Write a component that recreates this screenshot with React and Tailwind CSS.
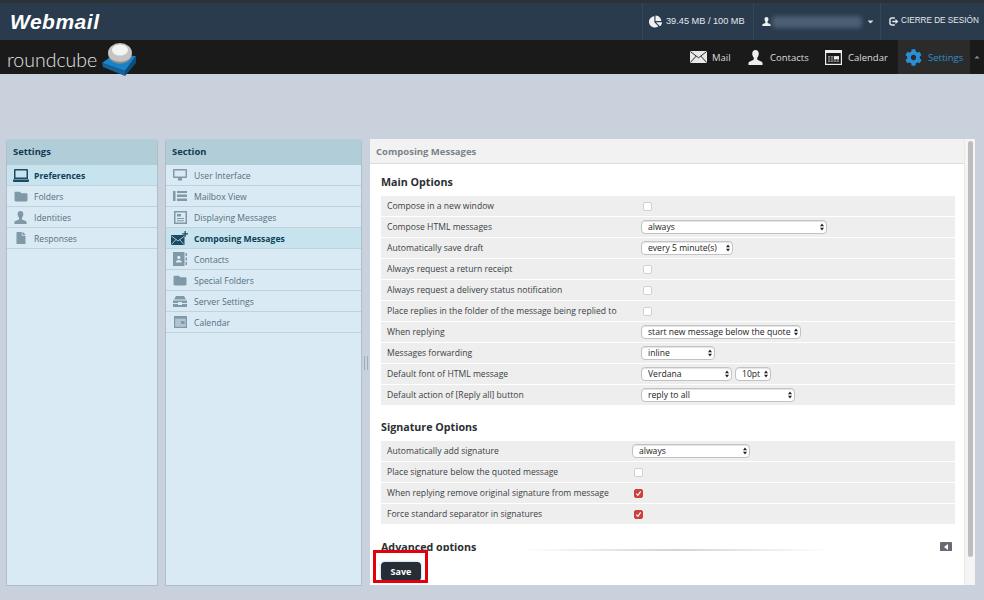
import React from "react";
import { FaChartPie, FaCaretDown, FaCog, FaFolder, FaFile, FaCaretUp } from "react-icons/fa";

const bodyFont = "font-['Open_Sans',sans-serif]";

function UserBust({ className }) {
  return (
    <svg viewBox="0 0 16 16" className={`${className} shrink-0`} fill="currentColor">
      <path d="M8 0c2.2 0 3.5 1.6 3.5 3.8 0 2-.8 3.6-1.7 4.5v1.4c0 .8 1 1.2 2.4 1.7 1.8.6 3.3 1.2 3.3 2.6V16H.5v-2c0-1.4 1.5-2 3.3-2.6 1.4-.5 2.4-.9 2.4-1.7V8.3C5.3 7.4 4.5 5.8 4.5 3.8 4.5 1.6 5.8 0 8 0z" />
    </svg>
  );
}

function Laptop() {
  return (
    <svg viewBox="0 0 16 13" className="w-[16px] h-[13px]" fill="currentColor">
      <path d="M2 0h12a1 1 0 0 1 1 1v9H1V1a1 1 0 0 1 1-1zm.5 1.5v7h11v-7z" />
      <path d="M0 10.5h16V12a1 1 0 0 1-1 1H1a1 1 0 0 1-1-1z" />
    </svg>
  );
}

function Monitor() {
  return (
    <svg viewBox="0 0 14 13" className="w-[14px] h-[13px]" fill="currentColor">
      <path d="M1 0h12a1 1 0 0 1 1 1v7a1 1 0 0 1-1 1H1a1 1 0 0 1-1-1V1a1 1 0 0 1 1-1zm.5 1.5v6h11v-6z" />
      <path d="M5 9h4v2.5H5z" />
    </svg>
  );
}

function ListIcon() {
  return (
    <svg viewBox="0 0 14 10" className="w-[14px] h-[10px]" fill="currentColor">
      <path d="M0 0h2.5v10H0zM4 0h10v2H4zM4 3.5h10V6H4zM4 7.5h10V10H4z" />
    </svg>
  );
}

function DocIcon() {
  return (
    <svg viewBox="0 0 13 13" className="w-[13px] h-[13px]" fill="currentColor">
      <path fillRule="evenodd" d="M0 0h13v13H0zM1.5 1.5v10h10v-10z" />
      <path d="M3 3h4v2.5H3zM3 7h7v1H3zM3 9.2h7v1H3z" />
    </svg>
  );
}

function MailPlus() {
  return (
    <svg viewBox="0 0 18 14" className="w-[18px] h-[14px]">
      <path d="M0 4h13.5v10H0z" fill="currentColor" />
      <path d="M0.5 5l6.5 5 6.5-5M0.5 13.5l4.5-5M13 13.5l-4.5-5" stroke="#c6e3ee" strokeWidth="0.8" fill="none" />
      <path d="M13.5 0h1.3v2.2H17v1.3h-2.2v2.2h-1.3V3.5h-2.2V2.2h2.2z" fill="currentColor" />
    </svg>
  );
}

function ContactCard() {
  return (
    <svg viewBox="0 0 14 14" className="w-[14px] h-[14px]">
      <path d="M0 0h11.5v14H0z" fill="currentColor" />
      <path d="M12.5 1h1.5v3h-1.5zM12.5 5.5h1.5v3h-1.5zM12.5 10h1.5v3h-1.5z" fill="currentColor" />
      <circle cx="5.8" cy="5.5" r="1.7" fill="#d9eaf4" />
      <path d="M2.8 10.5c0-2 1.5-2.6 3-2.6s3 .6 3 2.6z" fill="#d9eaf4" />
    </svg>
  );
}

function ServerIcon() {
  return (
    <svg viewBox="0 0 14 11" className="w-[14px] h-[11px]" fill="currentColor">
      <path d="M3 0h8l2 3.5H1z" />
      <path d="M0 4.5h14V7H9V6H5v1H0zM0 8h5v1h4V8h5v3H0z" />
    </svg>
  );
}

function CalendarSmall() {
  return (
    <svg viewBox="0 0 13 12" className="w-[13px] h-[12px]">
      <path d="M0 0h13v12H0z" fill="currentColor" />
      <path d="M1.2 2.6h10.6v8.2H1.2z" fill="#d9eaf4" opacity="0.55" />
      <path d="M7 5h3.5v3H7z" fill="currentColor" />
    </svg>
  );
}

function MailNav() {
  return (
    <svg viewBox="0 0 17 12" className="w-[17px] h-[12px] shrink-0">
      <path d="M0 0h17v12H0z" fill="#e8e8e8" />
      <path d="M0.3 0.5l8.2 6.3 8.2-6.3M0.3 11.6l5.8-6.5M16.7 11.6l-5.8-6.5" stroke="#1a1a1a" strokeWidth="0.9" fill="none" />
    </svg>
  );
}

function CalendarNav() {
  return (
    <svg viewBox="0 0 17 15" className="w-[17px] h-[15px] shrink-0">
      <path d="M0 0h17v15H0z" fill="#eee" />
      <path d="M1.2 3h14.6v10.8H1.2z" fill="#1a1a1a" />
      <path d="M3 6h11v6H3z" fill="#8a8a8a" />
      <path d="M5.5 6v6M8.5 6v6M11.5 6v6M3 8h11M3 10h11" stroke="#1a1a1a" strokeWidth="0.6" />
      <path d="M9 6.2h5v3H9z" fill="#eee" />
    </svg>
  );
}

function LogoutIcon() {
  return (
    <svg viewBox="0 0 11 10" className="w-[10px] h-[9px] shrink-0" fill="none" stroke="#e4e8ec" strokeWidth="1.6">
      <path d="M6.5 1.2H3a2 2 0 0 0-2 2v3.6a2 2 0 0 0 2 2h3.5" />
      <path d="M3.5 5H8" />
      <path d="M7.2 2.2L10.4 5 7.2 7.8z" fill="#e4e8ec" stroke="none" />
    </svg>
  );
}

function CubeLogo() {
  return (
    <svg viewBox="0 0 36 34" className="w-[36px] h-[34px]">
      <path d="M1 20l11-8 23 1-11 15z" fill="#1c82c8" />
      <path d="M1 20l23 8v5L2 24z" fill="#15639b" />
      <path d="M24 28l11-15v7L24 33z" fill="#0e4e7c" />
      <ellipse cx="19" cy="10" rx="12" ry="10" fill="#c4c4c4" />
      <ellipse cx="19" cy="7" rx="8" ry="5.5" fill="#f3f3f3" />
      <path d="M7.5 13c3 7 20 8 23 0-2 10-21 10-23 0z" fill="#8e8e8e" />
    </svg>
  );
}

function Select({ width, value }) {
  return (
    <div className="relative shrink-0" style={{ width }}>
      <select
        defaultValue={value}
        className={`${bodyFont} block w-full h-[14px] appearance-none rounded-[4px] border border-[#c2c2c2] bg-white pl-[6px] pr-0 text-[8.6px] leading-[12px] text-[#222] shadow-[inset_0_1px_1px_#e4e4e4]`}
      >
        <option>{value}</option>
      </select>
      <svg viewBox="0 0 5 9" className="absolute right-[3px] top-[3px] w-[4px] h-[8px] pointer-events-none" fill="#222">
        <path d="M2.5 0L5 3.5H0zM2.5 9L0 5.5h5z" />
      </svg>
    </div>
  );
}

function Check({ on }) {
  return (
    <span
      className={`ml-[2px] flex w-[9px] h-[9px] items-center justify-center rounded-[2px] border ${
        on ? "bg-[#d2403c] border-[#c9413d]" : "bg-white border-[#d0d0d0]"
      }`}
    >
      {on && (
        <svg viewBox="0 0 8 8" className="w-[7px] h-[7px]" fill="none" stroke="#fff" strokeWidth="1.3">
          <path d="M1.5 4.2l1.8 2 3.2-4.7" />
        </svg>
      )}
    </span>
  );
}

function Row({ label, labelWidth, children }) {
  return (
    <div className="flex h-5 items-center bg-[#eeeeee] pl-[6px]">
      <span className="shrink-0 whitespace-nowrap text-[8.6px] text-[#3a3f44]" style={{ width: labelWidth }}>{label}</span>
      <div className="flex items-center gap-[3px]">{children}</div>
    </div>
  );
}

function SideRow({ icon, label, active, x }) {
  return (
    <div
      className={`flex h-[21px] items-center border-b border-[#bfd3dd] text-[8.6px] ${
        active ? "bg-[#c6e3ee] font-bold text-[#0f3f59]" : "text-[#546f7e]"
      }`}
    >
      <div className={`flex items-center justify-center shrink-0 ${x} ${active ? "text-[#1d4a63]" : "text-[#7f99a7]"}`}>{icon}</div>
      <span className="whitespace-nowrap pt-[2px]">{label}</span>
    </div>
  );
}

function SidePanel({ title, width, children }) {
  return (
    <div className={`${width} h-[447px] shrink-0 overflow-hidden rounded-t-[3px] border border-t-0 border-[#aebfca] bg-[#d9eaf4]`}>
      <div className="flex h-[26px] items-center bg-[#b0cdd8] pl-[6px] text-[9.4px] font-bold text-[#12394f]">{title}</div>
      {children}
    </div>
  );
}

const mainRows = [
  ["Compose in a new window", <Check />],
  ["Compose HTML messages", <Select width={186} value="always" />],
  ["Automatically save draft", <Select width={92} value="every 5 minute(s)" />],
  ["Always request a return receipt", <Check />],
  ["Always request a delivery status notification", <Check />],
  ["Place replies in the folder of the message being replied to", <Check />],
  ["When replying", <Select width={160} value="start new message below the quote" />],
  ["Messages forwarding", <Select width={74} value="inline" />],
  ["Default font of HTML message", <><Select width={91} value="Verdana" /><Select width={36} value="10pt" /></>],
  ["Default action of [Reply all] button", <Select width={154} value="reply to all" />],
];

const sigRows = [
  ["Automatically add signature", <Select width={118} value="always" />],
  ["Place signature below the quoted message", <Check />],
  ["When replying remove original signature from message", <Check on />],
  ["Force standard separator in signatures", <Check on />],
];

export default function App() {
  return (
    <div className={`${bodyFont} relative h-[600px] w-[984px] overflow-hidden bg-[#c9d2dc]`}>
      {/* top bar */}
      <div className="flex h-[40px] items-center justify-between border-t-[3px] border-[#2d3236] bg-[#2a3b4e] font-['Liberation_Sans',sans-serif]">
        <span className="ml-[10px] text-[21px] font-black italic leading-none tracking-[0.5px] text-white">Webmail</span>
        <div className="flex h-full items-center text-[#e4e8ec]">
          <div className="flex h-full w-[111px] items-center gap-[4px] border-l border-[#34465a] pl-[6px]">
            <FaChartPie className="h-[13px] w-[13px] shrink-0 text-[#eef1f4]" />
            <span className="whitespace-nowrap text-[9.2px]">39.45 MB / 100 MB</span>
          </div>
          <div className="flex h-full w-[127px] items-center border-l border-[#34465a] pl-[8px]">
            <UserBust className="h-[9px] w-[9px] text-[#eef1f4]" />
            <div className="ml-[1px] h-[12px] w-[90px] rounded-sm bg-[#4b5e72] blur-[2px]" />
            <FaCaretDown className="ml-[4px] h-[9px] w-[9px] shrink-0 text-[#d8dde2]" />
          </div>
          <div className="flex h-full w-[104px] items-center gap-[2px] border-l border-[#34465a] pl-[8px]">
            <LogoutIcon />
            <span className="whitespace-nowrap text-[8.2px]">CIERRE DE SESIÓN</span>
          </div>
        </div>
      </div>

      {/* nav bar */}
      <div className="flex h-[34px] items-center justify-between bg-[#1a1a1a]">
        <div className="relative flex h-full items-center pl-[7px]">
          <span className="pt-[5px] font-['Lato',sans-serif] text-[19.5px] font-light leading-none text-[#e2e2e2]">roundcube</span>
          <div className="absolute left-[101px] top-[3px]"><CubeLogo /></div>
        </div>
        <div className="flex h-full items-center text-[9.5px] text-[#dcdcdc]">
          <MailNav />
          <span className="ml-[5px] mr-[18px] w-[18px] whitespace-nowrap pt-[2px]">Mail</span>
          <UserBust className="h-[15px] w-[15px] text-[#eeeeee]" />
          <span className="ml-[7px] mr-[17px] w-[38px] whitespace-nowrap pt-[2px]">Contacts</span>
          <CalendarNav />
          <span className="ml-[6px] mr-[11px] w-[39px] whitespace-nowrap pt-[2px]">Calendar</span>
          <div className="flex h-full w-[72px] items-center bg-[#2b2b2b] pl-[7px] text-[#2f8fd0]">
            <FaCog className="h-[17px] w-[17px] text-[#2a8fd6]" />
            <span className="ml-[6px] pt-[2px]">Settings</span>
          </div>
          <div className="flex w-[14px] justify-center">
            <FaCaretUp className="h-[8px] w-[8px] text-[#8a8a8a]" />
          </div>
        </div>
      </div>

      {/* panels */}
      <div className="flex pl-[6px] pt-[65px]">
        <SidePanel title="Settings" width="w-[152px]">
          <SideRow x="w-[27px]" active icon={<Laptop />} label="Preferences" />
          <SideRow x="w-[27px]" icon={<FaFolder className="h-[13px] w-[14px]" />} label="Folders" />
          <SideRow x="w-[27px]" icon={<UserBust className="h-[13px] w-[13px]" />} label="Identities" />
          <SideRow x="w-[27px]" icon={<FaFile className="h-[12px] w-[10px]" />} label="Responses" />
        </SidePanel>

        <div className="w-[7px] shrink-0" />

        <SidePanel title="Section" width="w-[197px]">
          <SideRow x="w-[28px]" icon={<Monitor />} label="User Interface" />
          <SideRow x="w-[28px]" icon={<ListIcon />} label="Mailbox View" />
          <SideRow x="w-[28px]" icon={<DocIcon />} label="Displaying Messages" />
          <SideRow x="w-[28px]" active icon={<MailPlus />} label="Composing Messages" />
          <SideRow x="w-[28px]" icon={<ContactCard />} label="Contacts" />
          <SideRow x="w-[28px]" icon={<FaFolder className="h-[13px] w-[14px]" />} label="Special Folders" />
          <SideRow x="w-[28px]" icon={<ServerIcon />} label="Server Settings" />
          <SideRow x="w-[28px]" icon={<CalendarSmall />} label="Calendar" />
        </SidePanel>

        {/* splitter */}
        <div className="flex w-[8px] shrink-0 justify-center pt-[217px]">
          <div className="h-[14px] w-[4px] border-x border-[#a3adb7]" />
        </div>

        {/* main */}
        <div className="relative h-[446px] w-[605px] shrink-0 overflow-hidden bg-white">
          <div className="flex">
            <div className="w-[594px] shrink-0">
              <div className="flex h-[25px] items-center border-b border-[#dddddd] bg-[#f2f2f2] pl-[6px] pt-[3px] text-[9.5px] font-bold text-[#7a8288]">
                Composing Messages
              </div>
              <div className="pl-[11px] pr-[9px]">
                <h3 className="flex h-[32px] items-center pt-[5px] text-[10.7px] font-bold text-[#2b2f33]">Main Options</h3>
                <div className="flex flex-col gap-px">
                  {mainRows.map(([label, control]) => (
                    <Row key={label} label={label} labelWidth={254}>{control}</Row>
                  ))}
                </div>
                <h3 className="flex h-[36px] items-center pt-[8px] text-[10.7px] font-bold text-[#2b2f33]">Signature Options</h3>
                <div className="flex flex-col gap-px">
                  {sigRows.map(([label, control]) => (
                    <Row key={label} label={label} labelWidth={245}>{control}</Row>
                  ))}
                </div>
                <div className="relative mt-[16px] flex h-[14px] items-center justify-between">
                  <h3 className="text-[10.7px] font-bold leading-none text-[#2b2f33]">Advanced options</h3>
                  <div className="absolute left-[140px] top-[9px] h-[2px] w-[310px] bg-gradient-to-r from-transparent via-[#d4d4d4] to-transparent" />
                  <div className="mr-[3px] flex h-[10px] w-[12px] items-center justify-center rounded-[1px] bg-[#666c72]">
                    <svg viewBox="0 0 4 6" className="h-[6px] w-[4px]" fill="#fff"><path d="M4 0v6L0 3z" /></svg>
                  </div>
                </div>
              </div>
            </div>
            {/* scrollbar */}
            <div className="h-[446px] flex-1 border-l border-[#e8e8e8] bg-[#f5f5f5] pl-[3px] pt-[2px]">
              <div className="h-[416px] w-[5px] rounded-full bg-[#bdbdbd]" />
            </div>
          </div>

          {/* save bar lies over the scrolled content */}
          <div className="absolute bottom-0 left-0 h-[34px] w-[594px] bg-white pl-[11px] pt-[6px]">
            <button className="h-[19px] w-[40px] rounded-[4px] bg-[#262d36] text-[9px] font-bold text-white shadow-[0_0_3px_#9cc4e4]">Save</button>
          </div>
          <div className="absolute bottom-[2px] left-[3px] h-[33px] w-[55px] border-[3px] border-[#e2000f]" />
        </div>
      </div>
    </div>
  );
}
